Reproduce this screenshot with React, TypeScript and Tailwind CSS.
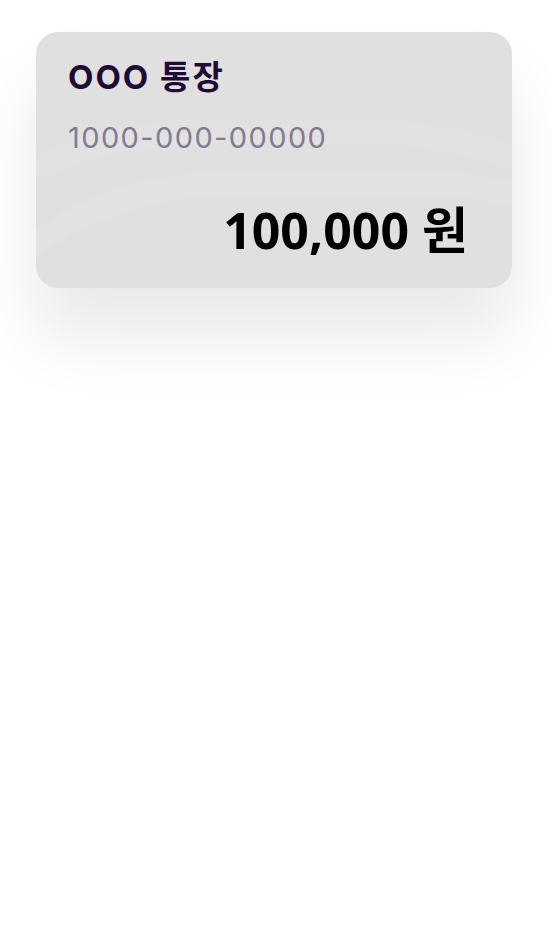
export default function App() {
  return (
    <div className="min-h-screen bg-white px-9 pt-8" style={{ fontFamily: 'Inter, "Noto Sans CJK KR", sans-serif' }}>
      <div className="relative h-[256px] w-[476px] overflow-hidden rounded-[22px] bg-[#e0e0e0] shadow-[0_50px_70px_rgba(0,0,0,0.09)]">
        {/* faint arcs */}
        <div className="absolute -left-[200px] top-[90px] h-[700px] w-[900px] rounded-full border-[24px] border-white/[0.06]" />
        <div className="absolute -left-[160px] top-[140px] h-[700px] w-[900px] rounded-full border-[24px] border-white/[0.05]" />
        <div className="relative flex h-full flex-col px-8 pt-[23px]">
          <h2 className="text-[33px] font-bold leading-[44px] tracking-[2px] text-[#200b35]">OOO 통장</h2>
          <p className="mt-[19px] text-[29px] leading-[40px] tracking-[1.4px] text-[#857a92]">1000-000-00000</p>
          <p
            className="mt-[42px] pr-[12px] text-right text-[50px] font-bold leading-[60px] text-black"
            style={{ fontFamily: '"Noto Sans", "Noto Sans CJK KR", sans-serif' }}
          >
            100,000 원
          </p>
        </div>
      </div>
    </div>
  );
}
